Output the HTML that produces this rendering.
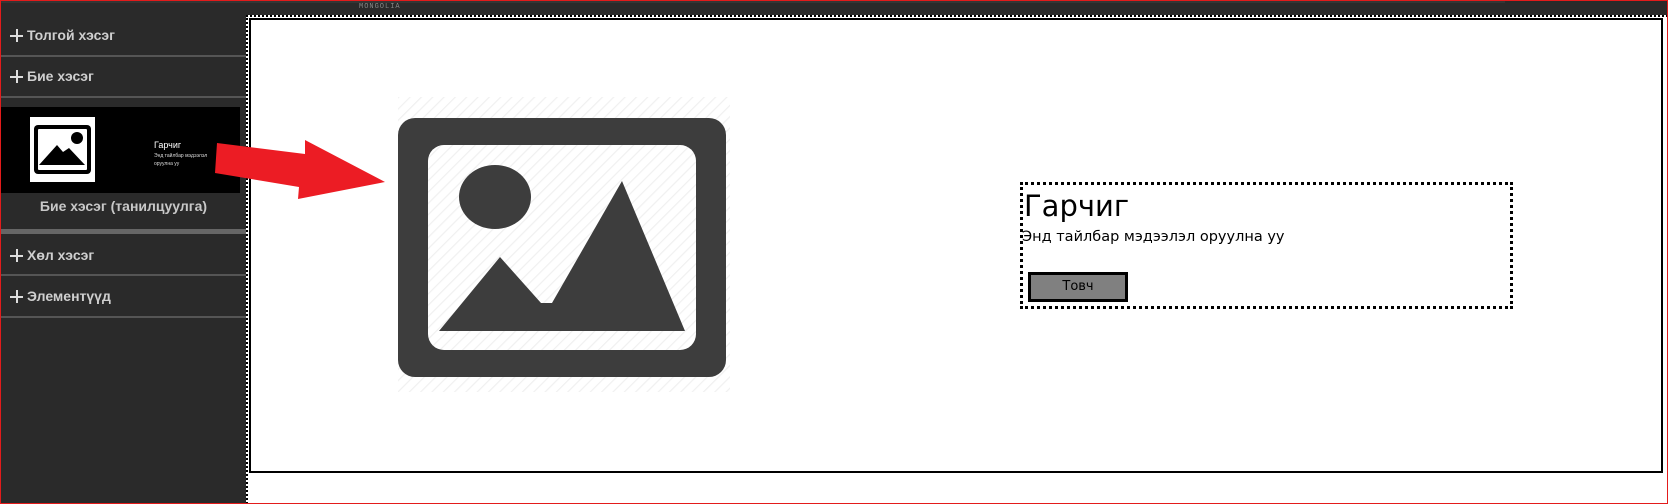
<!DOCTYPE html>
<html><head><meta charset="utf-8"><style>
*{margin:0;padding:0;box-sizing:border-box}
html,body{width:1668px;height:504px;overflow:hidden;background:#2a2a2a;font-family:"Liberation Sans","DejaVu Sans",sans-serif}
.frame{position:absolute;left:0;top:0;width:1668px;height:504px;border:1px solid #e31b1b;z-index:10;pointer-events:none}
.item{position:absolute;left:10px;color:#cfcfcf;font-weight:bold;font-size:14px;height:20px;line-height:20px;padding-left:17px}
.item i{position:absolute;left:0;top:4px;width:13px;height:13px}
.item i:before{content:"";position:absolute;left:0;top:5.5px;width:13px;height:2px;background:#ddd}
.item i:after{content:"";position:absolute;left:5.5px;top:0;width:2px;height:13px;background:#ddd}
.sep{position:absolute;left:1px;width:245px;height:2px;background:#555}
</style></head><body>
<div class="frame"></div>
<div style="position:absolute;left:1px;top:1px;width:1504px;height:2px;background:#353535"></div>
<div style="position:absolute;left:359px;top:3px;font-family:'Liberation Mono',monospace;font-size:7px;color:#888;letter-spacing:1px">MONGOLIA</div>

<div class="item" style="top:25px"><i></i>Толгой хэсэг</div>
<div class="sep" style="top:55px"></div>
<div class="item" style="top:66px"><i></i>Бие хэсэг</div>
<div class="sep" style="top:96px"></div>
<div style="position:absolute;left:1px;top:107px;width:239px;height:86px;background:#000">
  <div style="position:absolute;left:29px;top:10px;width:65px;height:65px;background:#fff">
    <svg width="65" height="65" viewBox="0 0 65 65" style="position:absolute;left:0;top:0">
      <rect x="4" y="8" width="57" height="49" rx="4" fill="#000"/>
      <rect x="8" y="12" width="49" height="41" rx="1" fill="#fff"/>
      <circle cx="47" cy="21" r="6" fill="#000"/>
      <polygon points="9,48 27,28 33,35 39,31 55,48" fill="#000"/>
    </svg>
  </div>
  <div style="position:absolute;left:153px;top:33px;color:#fff;font-size:9px">Гарчиг</div>
  <div style="position:absolute;left:153px;top:45px;color:#ddd;font-size:5px;line-height:8px;width:60px">Энд тайлбар мэдээлэл оруулна уу</div>
</div>
<div style="position:absolute;left:1px;width:245px;top:198px;text-align:center;color:#c8c8c8;font-weight:bold;font-size:14px">Бие хэсэг (танилцуулга)</div>
<div style="position:absolute;left:1px;top:229px;width:245px;height:5px;background:#666"></div>
<div class="item" style="top:245px"><i></i>Хөл хэсэг</div>
<div class="sep" style="top:274px"></div>
<div class="item" style="top:286px"><i></i>Элементүүд</div>
<div class="sep" style="top:316px"></div>

<div style="position:absolute;left:246px;top:15px;width:1422px;height:489px;background:#fff;border-left:2px dotted #000;border-top:2px dotted #000"></div>
<div style="position:absolute;left:249px;top:18px;width:1414px;height:455px;border:2px solid #000;background:#fff"></div>

<svg style="position:absolute;left:398px;top:97px" width="332" height="295" viewBox="0 0 332 295">
  <defs><pattern id="h" width="8" height="8" patternUnits="userSpaceOnUse" patternTransform="rotate(45)"><rect width="8" height="8" fill="#fff"/><rect width="1.2" height="8" fill="#f0f0f0"/></pattern></defs>
  <rect x="0" y="0" width="332" height="295" fill="url(#h)"/>
  <rect x="0" y="21" width="328" height="259" rx="17" fill="#3d3d3d"/>
  <rect x="30" y="48" width="268" height="205" rx="16" fill="url(#h)"/>
  <ellipse cx="97" cy="100" rx="36" ry="32" fill="#3d3d3d"/>
  <polygon points="41,234 102,160 143,206 154,206 224,84 287,234" fill="#3d3d3d"/>
</svg>

<svg style="position:absolute;left:0;top:0" width="400" height="220">
  <polygon points="217,143 305,154 305,140 385,182 298,199 299,187 215,173" fill="#ec1c24"/>
</svg>

<div style="position:absolute;left:1020px;top:182px;width:493px;height:127px;border:3px dotted #000"></div>
<div style="position:absolute;left:1024px;top:189px;font-family:'DejaVu Sans','Liberation Sans',sans-serif;font-size:29px;color:#000">Гарчиг</div>
<div style="position:absolute;left:1022px;top:229px;font-family:'DejaVu Sans','Liberation Sans',sans-serif;font-size:14.5px;color:#000">Энд тайлбар мэдээлэл оруулна уу</div>
<div style="position:absolute;left:1028px;top:272px;width:100px;height:30px;border:3px solid #000;background:#808080;text-align:center;line-height:24px;font-size:13px;font-family:'DejaVu Sans',sans-serif">Товч</div>
</body></html>
